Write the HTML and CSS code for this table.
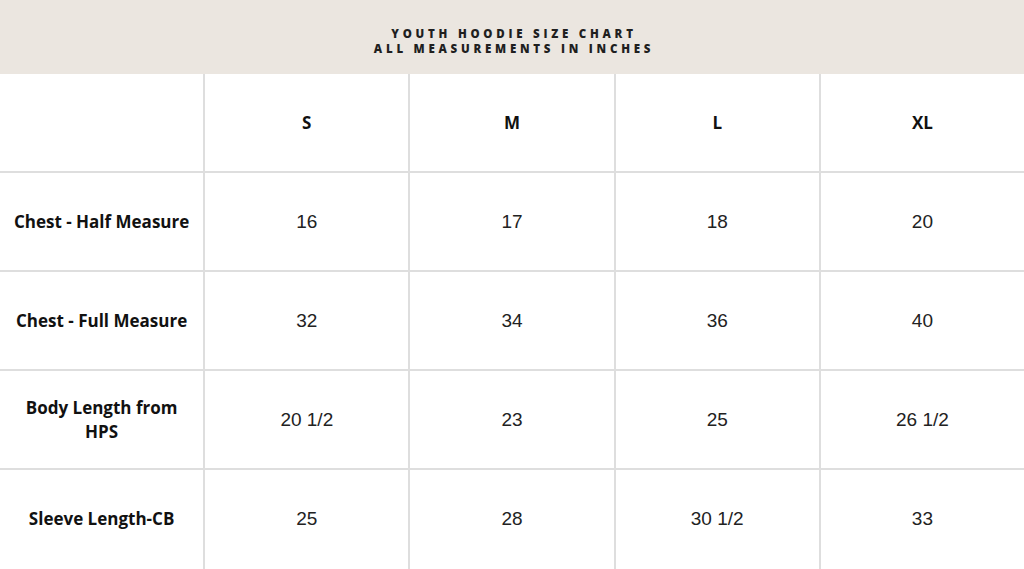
FILE: index.html
```html
<!DOCTYPE html>
<html>
<head>
<meta charset="utf-8">
<link rel="stylesheet" href="styles.css">
</head>
<body>
<header class="band">
  <div class="title">YOUTH HOODIE SIZE CHART</div>
  <div class="title">ALL MEASUREMENTS IN INCHES</div>
</header>
<main class="chart">
  <div class="cell"></div>
  <div class="cell size">S</div>
  <div class="cell size">M</div>
  <div class="cell size">L</div>
  <div class="cell size">XL</div>

  <div class="cell label">Chest - Half Measure</div>
  <div class="cell val">16</div>
  <div class="cell val">17</div>
  <div class="cell val">18</div>
  <div class="cell val">20</div>

  <div class="cell label">Chest - Full Measure</div>
  <div class="cell val">32</div>
  <div class="cell val">34</div>
  <div class="cell val">36</div>
  <div class="cell val">40</div>

  <div class="cell label">Body Length from HPS</div>
  <div class="cell val">20 1/2</div>
  <div class="cell val">23</div>
  <div class="cell val">25</div>
  <div class="cell val">26 1/2</div>

  <div class="cell label">Sleeve Length-CB</div>
  <div class="cell val">25</div>
  <div class="cell val">28</div>
  <div class="cell val">30 1/2</div>
  <div class="cell val">33</div>
</main>
</body>
</html>
```

FILE: styles.css
```css
html, body {
  margin: 0;
  padding: 0;
  background: #ffffff;
}
body {
  width: 1024px;
  height: 569px;
  overflow: hidden;
}
.band {
  height: 74px;
  background: #ebe6e0;
  display: flex;
  flex-direction: column;
  align-items: center;
  justify-content: center;
  padding-top: 8px;
  box-sizing: border-box;
}
.title {
  font-family: "Open Sans", "Liberation Sans", sans-serif;
  font-weight: 800;
  font-size: 11.5px;
  letter-spacing: 3.75px;
  line-height: 15px;
  color: #1f1f1f;
  margin-right: -4px;
}
.chart {
  display: grid;
  grid-template-columns: repeat(5, 1fr);
  grid-template-rows: repeat(4, 97px) 1fr;
  gap: 2px;
  background: #dedede;
  height: 495px;
}
.cell {
  background: #ffffff;
  display: flex;
  align-items: center;
  justify-content: center;
  text-align: center;
}
.size {
  font-family: "Open Sans", "Liberation Sans", sans-serif;
  font-weight: 700;
  font-size: 17px;
  color: #111;
}
.label {
  font-family: "Open Sans", "Liberation Sans", sans-serif;
  font-weight: 700;
  font-size: 17px;
  line-height: 24px;
  color: #111;
  padding: 0 9px;
}
.val {
  font-family: "Liberation Sans", Arial, sans-serif;
  font-size: 19px;
  color: #222;
}
.chart > .cell:nth-last-child(-n+5) {
  padding-bottom: 2px;
}
```
